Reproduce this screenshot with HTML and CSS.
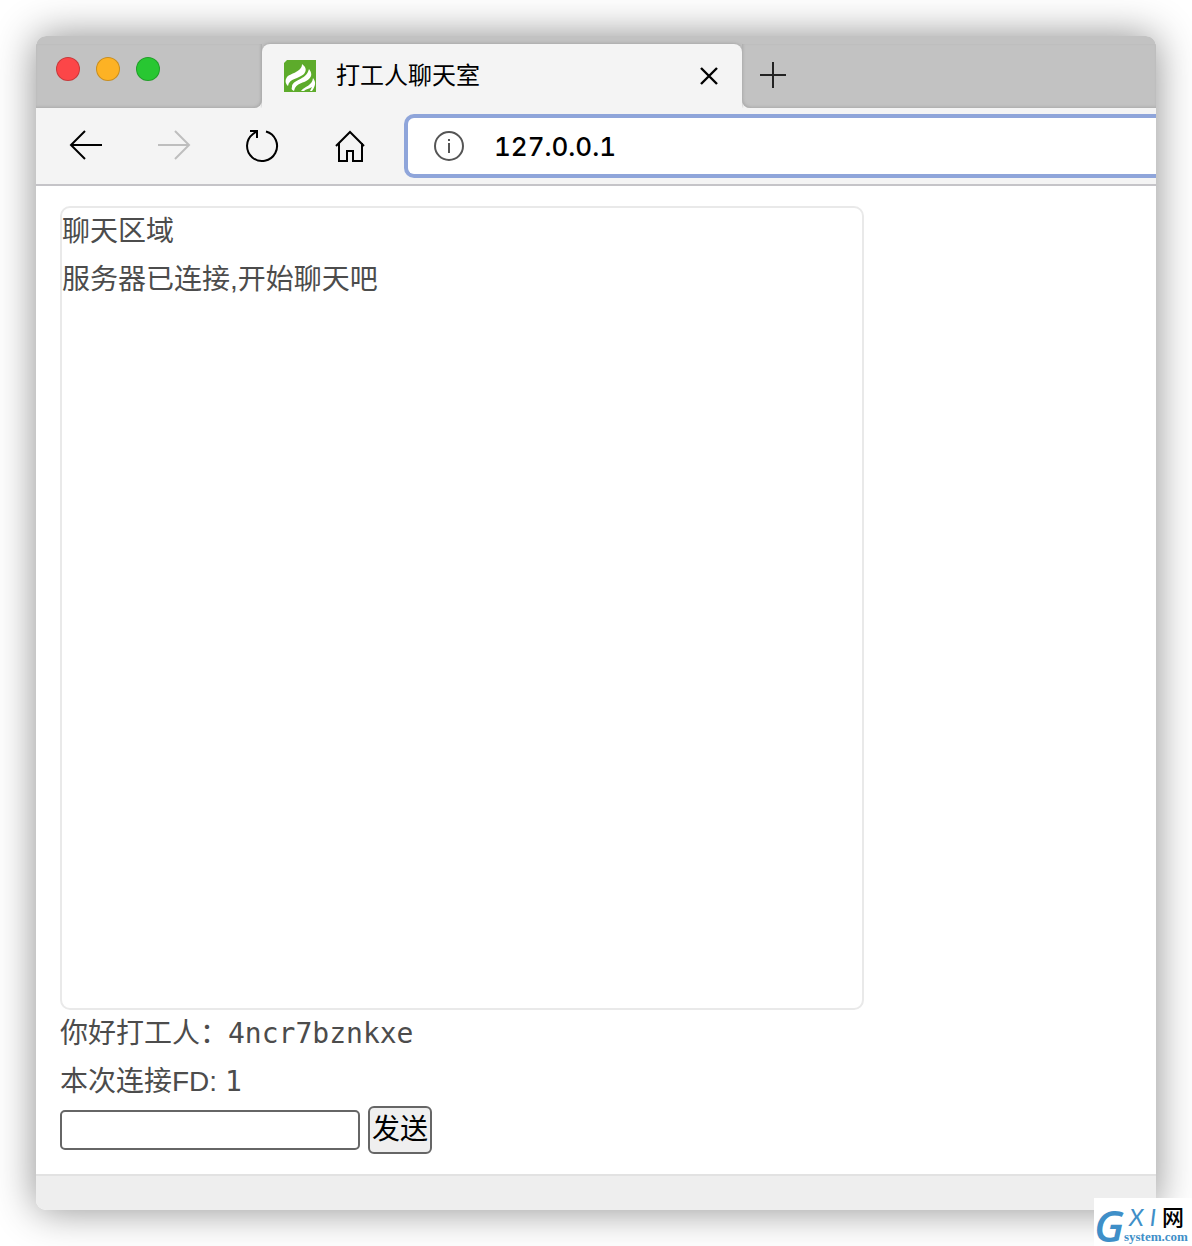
FILE: index.html
```html
<!DOCTYPE html>
<html lang="zh-CN">
<head>
  <meta charset="UTF-8">
  <title>打工人聊天室</title>
  <link rel="stylesheet" href="styles.css">
</head>
<body>

  <div class="window">
    <header class="titlebar">
      <div class="lights">
        <button class="light red" aria-label="关闭窗口"></button>
        <button class="light yellow" aria-label="最小化"></button>
        <button class="light green" aria-label="全屏"></button>
      </div>
      <div class="tab-wrap">
        <div class="tab">
          <svg class="favicon" viewBox="0 0 32 32">
            <path fill="#5dab2b" d="M3 0H32V32H0V3Z"/>
            <path fill="#fff" d="M3 17C7 13 18 12 18 4C22 7 23 10 20 14C15 19 5 18 4 26C1 23 1 20 3 17Z"/>
            <path fill="#fff" d="M8 27C8 19 22 21 25 9C28 13 28 16 25 19C20 24 12 22 10 31C8 30 7 29 8 27Z"/>
            <path fill="#fff" d="M17 31C21 26 28 26 29 18C32 22 32 25 28 31H26L28 27C25 29 22 29 20 31Z"/>
          </svg>
          <span class="tab-title">打工人聊天室</span>
          <button class="icon-btn" aria-label="关闭标签页">
            <svg width="18" height="18" viewBox="0 0 18 18"><path d="M1 1L17 17M17 1L1 17" stroke="#000" stroke-width="2.400"/></svg>
          </button>
        </div>
      </div>
      <div class="tab-space">
        <button class="icon-btn" aria-label="新建标签页">
          <svg width="26" height="26" viewBox="0 0 26 26"><path d="M13 0V26M0 13H26" stroke="#222" stroke-width="2"/></svg>
        </button>
      </div>
    </header>

    <nav class="toolbar">
      <button class="nav-btn" aria-label="后退">
        <svg viewBox="0 1 36 36"><path d="M34 18H3M17 4L3 18L17 32"/></svg>
      </button>
      <button class="nav-btn" aria-label="前进" disabled>
        <svg viewBox="0 1 36 36"><path d="M2 18H33M19 4L33 18L19 32"/></svg>
      </button>
      <button class="nav-btn" aria-label="刷新">
        <svg viewBox="0 1 36 36"><path d="M22 4.500A15 15 0 1 1 9 7L13 4M6 4H13V11"/></svg>
      </button>
      <button class="nav-btn" aria-label="主页">
        <svg viewBox="0 1 36 36"><path d="M4 19L18 5L32 19M7 16V34H15V24H21V34H30V16"/></svg>
      </button>
      <label class="address">
        <svg width="30" height="30" viewBox="0 0 30 30">
          <circle cx="15" cy="15" r="14" fill="none" stroke="#555" stroke-width="2"/>
          <path d="M15 12V22M15 8V10" stroke="#555" stroke-width="2"/>
        </svg>
        <input type="text" value="127.0.0.1" aria-label="地址">
      </label>
    </nav>

    <main class="page">
      <div class="chat" id="chat">
        <div>聊天区域</div>
        <div>服务器已连接,开始聊天吧</div>
      </div>
      <div>你好打工人：<span class="mono">4ncr7bznkxe</span></div>
      <div>本次连接FD: <span class="mono">1</span></div>
      <form class="send" id="send">
        <input type="text" id="message" aria-label="消息">
        <button type="submit">发送</button>
      </form>
    </main>

    <footer class="statusbar"></footer>
  </div>

  <div class="watermark">
    <span class="wm-g">G</span>
    <div class="wm-text">
      <div class="wm-top"><i>X</i><i>I</i><b>网</b></div>
      <div class="wm-bottom">system.com</div>
    </div>
  </div>

</body>
</html>
```
FILE: styles.css
```css
* {
  box-sizing: border-box;
}

body {
  margin: 0;
  padding: 36px;
  background: #fff;
  color: #4c4c4c;
  font: 28px/48px "Liberation Sans", "Noto Sans CJK SC", sans-serif;
  overflow: hidden;
}

button,
input {
  font-family: inherit;
}

.window {
  border-radius: 10px;
  overflow: hidden;
  background: #fff;
  box-shadow: 0 0 40px rgba(0, 0, 0, 0.45);
}

/* light lower half shows through the rounded corners beside the tab */
.titlebar {
  display: flex;
  height: 72px;
  padding-top: 8px;
  overflow: hidden;
  background: linear-gradient(#c2c2c2 50%, #f4f4f4 50%);
}

.lights,
.tab-space {
  display: flex;
  background: #c2c2c2;
}

.lights {
  width: 226px;
  padding: 13px 20px;
  gap: 16px;
  border-bottom-right-radius: 8px;
  box-shadow: inset -1px -1px 3px #aaa;
}

.light {
  width: 24px;
  height: 24px;
  padding: 0;
  border: 1px solid rgba(0, 0, 0, 0.2);
  border-radius: 50%;
}

.red {
  background: #fc4648;
}

.yellow {
  background: #fdb224;
}

.green {
  background: #28c732;
}

.tab-wrap {
  width: 480px;
  background: #c2c2c2;
}

.tab {
  display: flex;
  align-items: center;
  height: 64px;
  padding: 0 20px 0 22px;
  border-radius: 8px 8px 0 0;
  background: #f4f4f4;
  box-shadow: 0 -1px 3px #aaa;
}

.favicon {
  width: 32px;
  height: 32px;
  margin-right: 20px;
}

.tab-title {
  flex: 1;
  color: #000;
  font-size: 24px;
}

.icon-btn {
  display: flex;
  align-items: center;
  padding: 4px;
  border: none;
  background: none;
}

.tab-space {
  flex: 1;
  padding: 0 14px 2px;
  align-items: center;
  border-bottom-left-radius: 8px;
  box-shadow: inset 1px -1px 3px #aaa;
}

.toolbar {
  display: flex;
  align-items: center;
  height: 78px;
  padding-left: 6px;
  border-bottom: 2px solid #c5c4c8;
  background: #f4f4f4;
}

.nav-btn {
  display: flex;
  justify-content: center;
  width: 88px;
  padding: 0;
  border: none;
  background: none;
}

.nav-btn svg {
  width: 36px;
  height: 36px;
  fill: none;
  stroke: #000;
  stroke-width: 2;
}

.nav-btn:disabled svg {
  stroke: #bebebe;
}

.address {
  flex: 1;
  display: flex;
  align-items: center;
  gap: 30px;
  height: 64px;
  margin-left: 10px;
  padding: 0 26px;
  border: 4px solid #8fa5da;
  border-right: none;
  border-radius: 10px 0 0 10px;
  background: #fff;
}

.address input {
  flex: 1;
  padding: 0;
  border: none;
  outline: none;
  color: #000;
  font: 500 26px Inter, sans-serif;
  font-variant-numeric: tabular-nums;
}

.page {
  padding: 20px 24px;
}

.chat {
  max-width: 804px;
  height: 804px;
  border: 2px solid #e9e9e9;
  border-radius: 10px;
}

.mono {
  font-family: "DejaVu Sans Mono", monospace;
}

.send {
  display: flex;
  align-items: center;
  gap: 8px;
}

.send input {
  width: 300px;
  height: 40px;
  border: 2px solid #666;
  border-radius: 5px;
  font-size: 28px;
}

.send button {
  height: 48px;
  padding: 0 2px;
  border: 2px solid #666;
  border-radius: 6px;
  background: #efefef;
  color: #000;
  font-size: 28px;
  line-height: 44px;
}

.statusbar {
  height: 36px;
  border-top: 2px solid #e2e2e2;
  background: #eee;
}

/* site mark over the bottom right corner */
.watermark {
  position: absolute;
  right: 0;
  bottom: 0;
  display: flex;
  width: 98px;
  height: 48px;
  background: #fff;
  color: #3f8fc8;
}

.wm-g {
  width: 30px;
  font: italic 600 44px/54px "Open Sans", sans-serif;
}

.wm-top {
  display: flex;
  gap: 6px;
  height: 32px;
  padding-left: 5px;
  font: 24px/38px Lato, sans-serif;
}

.wm-top b {
  color: #000;
  font: 500 22px/34px "Noto Sans CJK SC", sans-serif;
}

.wm-bottom {
  font: bold 13px/14px "Liberation Serif", serif;
}
```
